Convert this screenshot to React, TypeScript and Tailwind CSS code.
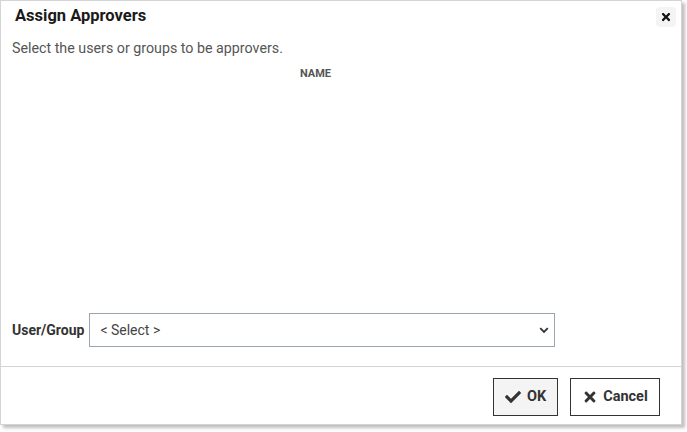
import React from 'react';
import { FaCheck, FaTimes } from 'react-icons/fa';

const App: React.FC = () => {
  return (
    <div className="w-[687px] h-[432px] bg-white" style={{ fontFamily: 'Roboto, "Liberation Sans", sans-serif' }}>
      <div className="relative flex flex-col w-[682px] h-[425px] border border-[#d4d4d4] bg-white shadow-[3px_3px_3px_rgba(0,0,0,0.25)]">
        {/* header */}
        <div className="flex items-center justify-between h-[31px] pl-[14px] pr-[5px]">
          <h2 className="text-[16.5px] font-bold text-[#1a1a1a]">Assign Approvers</h2>
          <button className="flex items-center justify-center w-[20px] h-[20px] rounded-sm bg-[#f4f4f4] text-[#111]">
            <FaTimes size={12} />
          </button>
        </div>

        {/* body */}
        <div className="flex flex-col flex-1 px-[11px]">
          <p className="mt-[8px] text-[14.25px] leading-[17px] text-[#555]">Select the users or groups to be approvers.</p>
          <div className="w-[607px] mt-[10px] text-center text-[11px] font-bold leading-[14px] text-[#555]">NAME</div>
          <div className="flex-1" />
          <div className="flex items-center gap-[5px] mb-[19px]">
            <label className="text-[14px] font-bold text-[#333]">User/Group</label>
            <div className="relative flex items-center w-[466px] h-[34px] border border-[#9aa5ad] bg-white pl-[10px]">
              <span className="text-[14px] text-[#444]">&lt; Select &gt;</span>
              <svg className="absolute right-[5px] top-[13px]" width="10" height="7" viewBox="0 0 10 7">
                <path d="M1.2 1.2 L5 5 L8.8 1.2" fill="none" stroke="#333" strokeWidth="1.8" />
              </svg>
            </div>
          </div>
        </div>

        {/* footer */}
        <div className="flex items-center justify-end gap-[12px] h-[58px] border-t border-[#d4d4d4] pr-[21px] pt-[2px]">
          <button className="flex items-center justify-center gap-[6px] w-[65px] h-[38px] border border-[#333] bg-[#f4f4f4] text-[14.5px] font-bold text-[#333]">
            <FaCheck size={16} />
            <span>OK</span>
          </button>
          <button className="flex items-center justify-center gap-[5px] w-[90px] h-[38px] border border-[#333] bg-white text-[14.5px] font-bold text-[#333]">
            <FaTimes size={16} />
            <span>Cancel</span>
          </button>
        </div>
      </div>
    </div>
  );
};

export default App;
